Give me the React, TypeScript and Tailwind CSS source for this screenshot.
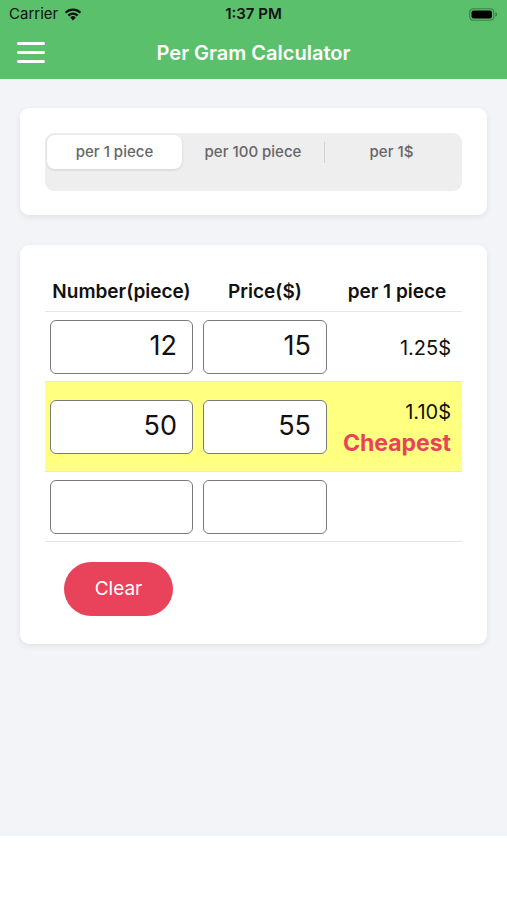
import React from "react";

function Wifi() {
  return (
    <svg width="18" height="13" viewBox="0 0 18 13">
      <path d="M9 12.5 L6.2 9.4 A4 4 0 0 1 11.8 9.4 Z" fill="#111" />
      <path d="M3.6 6.8 A7.6 7.6 0 0 1 14.4 6.8 L12.9 8.4 A5.5 5.5 0 0 0 5.1 8.4 Z" fill="#111" />
      <path d="M0.8 3.9 A11.6 11.6 0 0 1 17.2 3.9 L15.7 5.5 A9.4 9.4 0 0 0 2.3 5.5 Z" fill="#111" />
    </svg>
  );
}

function Battery() {
  return (
    <svg width="28" height="13" viewBox="0 0 28 13">
      <rect x="0.75" y="0.75" width="24" height="11.5" rx="3.5" fill="none" stroke="#2c5a33" strokeOpacity="0.6" strokeWidth="1.2" />
      <rect x="2.5" y="2.5" width="20.5" height="8" rx="2" fill="#000" />
      <path d="M26.3 4.5 A2 2 0 0 1 26.3 8.5 Z" fill="#2c5a33" fillOpacity="0.6" />
    </svg>
  );
}

function Input({ value }: { value?: string }) {
  return (
    <div className="h-[54px] rounded-[6px] border border-[#7a7a7a] bg-white flex items-center justify-end pr-[15px] text-[27px] text-[#111]">
      {value}
    </div>
  );
}

function Row({ a, b, result, cheapest }: { a?: string; b?: string; result?: string; cheapest?: boolean }) {
  return (
    <div className={`flex items-center border-b border-[#e6e6e6] ${cheapest ? "bg-[#ffff80] h-[90px]" : "h-[70px]"}`}>
      <div className="w-[153px] px-[5px]">
        <Input value={a} />
      </div>
      <div className="w-[134px] px-[5px]">
        <Input value={b} />
      </div>
      <div className="flex-1 flex flex-col items-end pr-[11px]">
        {result && <div className={`text-[20px] text-[#111] leading-[26px] ${cheapest ? "mt-[4px]" : "mt-[2px]"}`}>{result}</div>}
        {cheapest && <div className="text-[23px] font-bold text-[#e8435a] leading-[30px] mt-[3px]">Cheapest</div>}
      </div>
    </div>
  );
}

export default function App() {
  return (
    <div className="w-[507px] h-[900px] bg-white" style={{ fontFamily: "Inter, 'Noto Sans', sans-serif" }}>
      <div className="bg-[#5bc06b] h-[79px] flex flex-col">
        <div className="h-[28px] flex items-center px-[9px] relative">
          <div className="flex items-center gap-[6px] text-[15px] text-[#111]">
            <span>Carrier</span>
            <Wifi />
          </div>
          <div className="absolute left-0 right-0 text-center text-[15px] font-semibold text-[#111]">1:37 PM</div>
          <div className="ml-auto mr-[1px]">
            <Battery />
          </div>
        </div>
        <div className="flex-1 flex items-center relative">
          <div className="ml-[17px] flex flex-col gap-[6px] pb-[2px]">
            <div className="w-[28px] h-[3px] bg-white rounded-full" />
            <div className="w-[28px] h-[3px] bg-white rounded-full" />
            <div className="w-[28px] h-[3px] bg-white rounded-full" />
          </div>
          <div className="absolute left-0 right-0 text-center text-white text-[20px] font-semibold pb-[2px]">Per Gram Calculator</div>
        </div>
      </div>
      <div className="bg-[#f3f4f8] h-[757px] px-[20px] pt-[29px]">
        <div className="bg-white rounded-[9px] shadow-[0_2px_6px_rgba(0,0,0,0.08)] p-[25px] h-[107px]">
          <div className="bg-[#eeeeef] rounded-[9px] h-[58px] p-[2px]">
            <div className="flex h-[34px] items-center text-[15px] font-medium text-[#666]">
              <div className="w-[135px] h-full bg-white rounded-[8px] shadow-[0_1px_3px_rgba(0,0,0,0.12)] flex items-center justify-center">per 1 piece</div>
              <div className="w-[142px] text-center">per 100 piece</div>
              <div className="w-px h-[21px] bg-[#d2d2d4]" />
              <div className="flex-1 text-center pr-[2px]">per 1$</div>
            </div>
          </div>
        </div>
        <div className="mt-[30px] bg-white rounded-[9px] shadow-[0_2px_6px_rgba(0,0,0,0.08)] px-[25px] pt-[25px] pb-[28px]">
          <div className="flex items-end h-[42px] border-b border-[#e6e6e6] pb-[5px] text-[19px] font-semibold text-[#111]">
            <div className="w-[153px] text-center">Number(piece)</div>
            <div className="w-[134px] text-center">Price($)</div>
            <div className="flex-1 text-center">per 1 piece</div>
          </div>
          <Row a="12" b="15" result="1.25$" />
          <Row a="50" b="55" result="1.10$" cheapest />
          <Row />
          <div className="pt-[20px] pl-[19px]">
            <button className="w-[109px] h-[54px] rounded-full bg-[#e8435a] text-white text-[19px]">Clear</button>
          </div>
        </div>
      </div>
    </div>
  );
}
